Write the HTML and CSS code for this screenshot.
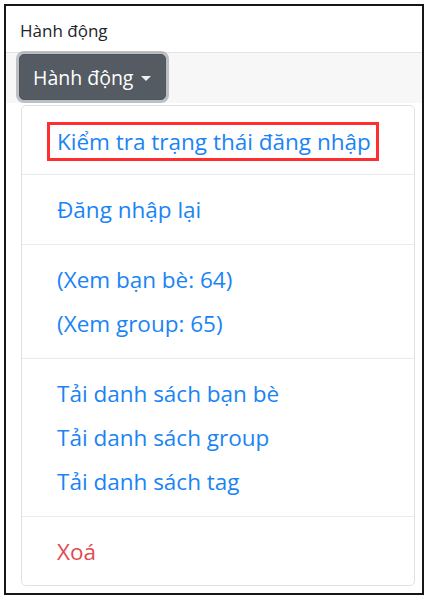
FILE: index.html
```html
<!DOCTYPE html>
<html lang="vi">
<head>
    <meta charset="UTF-8">
    <meta name="viewport" content="width=device-width, initial-scale=1.0">
    <title>Hành động</title>
    <link rel="stylesheet" href="styles.css">
</head>
<body>

    <div class="panel">
        <div class="panel-header">Hành động</div>

        <div class="toolbar">
            <button type="button" class="btn-action">Hành động<span class="caret"></span></button>
        </div>

        <div class="menu">
            <a href="#" class="menu-item is-marked"><span class="marker">Kiểm tra trạng thái đăng nhập</span></a>
            <div class="menu-divider"></div>
            <a href="#" class="menu-item">Đăng nhập lại</a>
            <div class="menu-divider"></div>
            <a href="#" class="menu-item">(Xem bạn bè: 64)</a>
            <a href="#" class="menu-item">(Xem group: 65)</a>
            <div class="menu-divider"></div>
            <a href="#" class="menu-item">Tải danh sách bạn bè</a>
            <a href="#" class="menu-item">Tải danh sách group</a>
            <a href="#" class="menu-item">Tải danh sách tag</a>
            <div class="menu-divider"></div>
            <a href="#" class="menu-item danger">Xoá</a>
        </div>
    </div>

</body>
</html>
```

FILE: styles.css
```css
* {
    box-sizing: border-box;
}

body {
    margin: 0;
    background: #fff;
    font-family: "Open Sans", "Noto Sans", sans-serif;
    color: #212529;
}

.panel {
    margin: 4px;
    width: 420px;
    height: 591px;
    border: 2px solid #161616;
    background: #fff;
}

.panel-header {
    height: 47px;
    padding: 3px 0 0 14px;
    display: flex;
    align-items: center;
    font-size: 17px;
    color: #212529;
    border-bottom: 1px solid #e3e3e3;
}

.toolbar {
    height: 50px;
    padding: 1px 0 3px 13px;
    background: #f7f7f7;
}

.btn-action {
    width: 147px;
    height: 46px;
    display: flex;
    align-items: center;
    padding: 0 0 0 13px;
    font-family: inherit;
    font-size: 19.5px;
    color: #fff;
    background: #545b62;
    border: 1px solid #4e555b;
    border-radius: 5px;
    box-shadow: 0 0 0 3px rgba(130, 138, 145, 0.5);
    cursor: pointer;
}

.caret {
    margin: 2px 0 0 8px;
    border-top: 5px solid #eee;
    border-left: 5px solid transparent;
    border-right: 5px solid transparent;
}

.menu {
    margin: 2px 7px 0 15px;
    padding: 12px 0 11px;
    background: #fff;
    border: 1px solid #dfe1e3;
    border-radius: 5px;
}

.menu-item {
    display: block;
    padding: 7px 35px;
    font-size: 22.5px;
    line-height: 30px;
    color: #1a84f5;
    text-decoration: none;
    white-space: nowrap;
}

.menu-item.is-marked {
    padding-top: 4px;
    padding-bottom: 1px;
}

.marker {
    display: inline-block;
    vertical-align: top;
    margin-left: -10px;
    padding: 0 5px 0 7px;
    line-height: 33px;
    border: 3px solid #ff2f2f;
}

.menu-item.danger {
    color: #e04a52;
}

.menu-divider {
    height: 1px;
    margin: 12px 0 13px;
    background: #e9ecef;
}
```
